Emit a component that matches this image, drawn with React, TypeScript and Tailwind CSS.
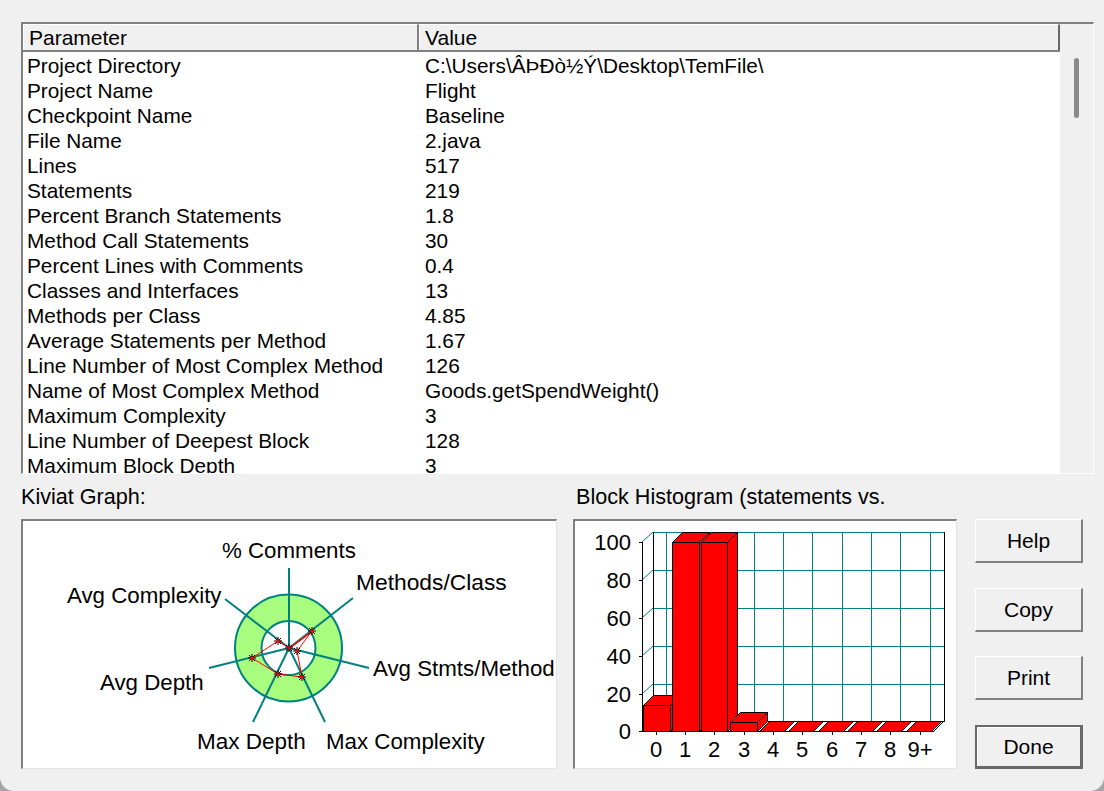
const ROWS: [string, string][] = [
  ['Project Directory', 'C:\\Users\\ÂÞÐò½Ý\\Desktop\\TemFile\\'],
  ['Project Name', 'Flight'],
  ['Checkpoint Name', 'Baseline'],
  ['File Name', '2.java'],
  ['Lines', '517'],
  ['Statements', '219'],
  ['Percent Branch Statements', '1.8'],
  ['Method Call Statements', '30'],
  ['Percent Lines with Comments', '0.4'],
  ['Classes and Interfaces', '13'],
  ['Methods per Class', '4.85'],
  ['Average Statements per Method', '1.67'],
  ['Line Number of Most Complex Method', '126'],
  ['Name of Most Complex Method', 'Goods.getSpendWeight()'],
  ['Maximum Complexity', '3'],
  ['Line Number of Deepest Block', '128'],
  ['Maximum Block Depth', '3'],
];

const TEAL = '#008080';
const CX = 266;
const CY = 127;

const SPOKES = [
  [266, 47],
  [330, 77],
  [346, 147],
  [302, 201],
  [230, 201],
  [186, 147],
  [202, 78],
];

// red plot, coordinates relative to the kiviat box
const PLOT: [number, number][] = [
  [266, 127],
  [289, 110],
  [274, 130],
  [279, 156],
  [255, 153],
  [229, 137],
  [255, 120],
];

const KIVIAT_LABELS: [string, number, number, number][] = [
  ['% Comments', 199, 37, 22.3],
  ['Methods/Class', 333, 69, 22.8],
  ['Avg Stmts/Method', 350, 155, 22.3],
  ['Max Complexity', 303, 228, 22.3],
  ['Max Depth', 174, 228, 22.5],
  ['Avg Depth', 77, 169, 22.3],
  ['Avg Complexity', 44, 82, 22.3],
];

const Kiviat = () => (
  <svg width="534" height="248" viewBox="0 0 534 248" className="block" style={{ fontFamily: '"Liberation Sans", Arial, sans-serif' }}>
    <circle cx="265.5" cy={CY} r="53.5" fill="#a8fc7e" stroke={TEAL} strokeWidth="2" />
    <circle cx="265.5" cy={CY} r="27" fill="#ffffff" stroke={TEAL} strokeWidth="2" />
    {SPOKES.map(([x, y]) => (
      <line key={`${x}-${y}`} x1={CX} y1={CY} x2={x} y2={y} stroke={TEAL} strokeWidth="2" />
    ))}
    <polygon points={PLOT.map((p) => p.join(',')).join(' ')} fill="none" stroke="#ff0000" strokeWidth="1" />
    <line x1="266" y1="127" x2="289" y2="110" stroke="#ff0000" strokeWidth="1" transform="translate(0 1)" />
    {PLOT.map(([x, y]) => (
      <g key={`${x}-${y}`}>
        <path d={`M${x - 4} ${y}h8M${x} ${y - 4}v8M${x - 3} ${y + 3}l6 -6M${x - 3} ${y - 3}l6 6`} stroke="#000000" strokeWidth="1" />
        <rect x={x - 1.5} y={y - 1.5} width="3" height="3" fill="#ff0000" />
      </g>
    ))}
    {KIVIAT_LABELS.map(([t, x, y, size]) => (
      <text key={t} x={x} y={y} fontSize={size} fill="#000000">
        {t}
      </text>
    ))}
  </svg>
);

const HIST_X = ['0', '1', '2', '3', '4', '5', '6', '7', '8', '9+'];
const HIST_Y = [0, 20, 40, 60, 80, 100];
const TICK_Y = [210, 173, 135, 97, 59, 21];
const TICK_X = [81, 110, 139, 169, 198, 227, 257, 286, 315, 345];
const BARS = [
  { x: 68, w: 27, top: 184 },
  { x: 97, w: 27, top: 21 },
  { x: 126, w: 26, top: 21 },
  { x: 155, w: 27, top: 201 },
];
const BASE = 210;

const Histogram = () => (
  <svg width="382" height="248" viewBox="0 0 382 248" className="block" style={{ fontFamily: '"Liberation Sans", Arial, sans-serif' }}>
    {/* back wall */}
    <rect x="78.5" y="11.5" width="291" height="189" fill="#ffffff" stroke="#000000" />
    {[11, 49, 87, 125, 163].map((y) => (
      <line key={y} x1="79" x2="369" y1={y + 0.5} y2={y + 0.5} stroke={TEAL} />
    ))}
    {TICK_X.map((x) => (
      <line key={x} x1={x + 10.5} x2={x + 10.5} y1="11" y2="200" stroke={TEAL} />
    ))}
    {TICK_Y.map((y) => (
      <line key={y} x1="67" y1={y} x2="78" y2={y - 10} stroke={TEAL} />
    ))}
    <line x1="67.5" y1="21" x2="67.5" y2="210" stroke="#000000" />
    <line x1="78.5" y1="11" x2="78.5" y2="200" stroke="#000000" />
    <line x1="359" y1="210" x2="369" y2="200" stroke="#000000" />
    {/* empty bars */}
    {TICK_X.slice(4).map((t) => {
      const x = t - 13.5;
      return (
        <polygon
          key={t}
          points={`${x},${BASE + 0.5} ${x + 25},${BASE + 0.5} ${x + 35},${BASE - 9.5} ${x + 10},${BASE - 9.5}`}
          fill="#ff0000"
          stroke="#000000"
        />
      );
    })}
    {/* bars with a height */}
    {BARS.map(({ x, w, top }) => {
      const l = x + 0.5;
      const t = top + 0.5;
      const b = BASE + 0.5;
      return (
        <g key={x} fill="#ff0000" stroke="#000000">
          <polygon points={`${l},${t} ${l + 10},${t - 10} ${l + w + 10},${t - 10} ${l + w},${t}`} />
          <polygon points={`${l + w},${t} ${l + w + 10},${t - 10} ${l + w + 10},${b - 10} ${l + w},${b}`} />
          <rect x={l} y={t} width={w} height={b - t} />
        </g>
      );
    })}
    <line x1="64" x2="359" y1="210.5" y2="210.5" stroke="#000000" />
    {TICK_Y.map((y) => (
      <line key={y} x1="64" x2="67" y1={y + 0.5} y2={y + 0.5} stroke="#000000" />
    ))}
    {TICK_X.map((x) => (
      <line key={x} x1={x + 0.5} x2={x + 0.5} y1="210" y2="214" stroke="#000000" />
    ))}
    {HIST_Y.map((v, i) => (
      <text key={v} x="56" y={TICK_Y[i] + 8} fontSize="22" textAnchor="end" fill="#000000">
        {v}
      </text>
    ))}
    {HIST_X.map((t, i) => (
      <text key={t} x={TICK_X[i]} y="236" fontSize="22" textAnchor="middle" fill="#000000">
        {t}
      </text>
    ))}
  </svg>
);

const DialogButton = ({ label, primary }: { label: string; primary?: boolean }) => (
  <button
    className={
      primary
        ? 'w-[108px] h-[44px] bg-[#f0f0f0] text-[21px] text-black border-2 border-[#696969] border-r-[3px] border-b-[3px] shadow-[inset_1px_1px_0_#ffffff]'
        : 'w-[108px] h-[44px] bg-[#f0f0f0] text-[21px] text-black border border-white border-r-2 border-b-2 border-r-[#808080] border-b-[#808080]'
    }
  >
    {label}
  </button>
);

export default function App() {
  return (
    <div className="w-[1104px] h-[791px] bg-[#a6a6a6]">
      <div className="w-[1104px] h-[791px] bg-[#f0f0f0] pt-[22px] pl-[21px] overflow-hidden text-black font-['Liberation_Sans',Arial,sans-serif] rounded-b-[14px]">
        {/* metrics table */}
        <div className="w-[1073px] h-[452px] flex border-t-2 border-l-2 border-t-[#808080] border-l-[#808080] border-r border-b border-r-white border-b-white">
          <div className="w-[1037px] flex flex-col bg-white">
            <div className="flex h-[28px] shrink-0 bg-[#f0f0f0] border-b-2 border-[#808080]">
              <div className="w-[396px] pl-[5px] text-[21px] leading-[26px] border-t border-l border-white border-r-2 border-r-[#808080]">Parameter</div>
              <div className="flex-1 pl-[5px] text-[21px] leading-[26px] border-t border-l border-white border-r-2 border-r-[#696969]">Value</div>
            </div>
            <div className="flex-1 overflow-hidden pt-[1px]">
              {ROWS.map(([param, value]) => (
                <div key={param} className="flex h-[25px] text-[20.8px] leading-[25px] whitespace-nowrap">
                  <div className="w-[398px] pl-[4px]">{param}</div>
                  <div className="flex-1 pl-[4px]">{value}</div>
                </div>
              ))}
            </div>
          </div>
          <div className="flex-1 pt-[34px] flex justify-center">
            <div className="w-[5px] h-[60px] rounded-full bg-[#8a8a8a]" />
          </div>
        </div>
        {/* graphs and buttons */}
        <div className="flex mt-[9px]">
          <div className="w-[552px]">
            <div className="h-[36px] text-[21.6px] leading-[28px]">Kiviat Graph:</div>
            <div className="w-[536px] h-[250px] bg-white border-t-2 border-l-2 border-t-[#808080] border-l-[#808080] border-r border-b border-r-[#e4e4e4] border-b-[#e4e4e4] overflow-hidden">
              <Kiviat />
            </div>
          </div>
          <div className="w-[402px]">
            <div className="h-[36px] text-[21.6px] leading-[28px] pl-[3px] whitespace-nowrap">Block Histogram (statements vs.</div>
            <div className="w-[384px] h-[250px] bg-white border-t-2 border-l-2 border-t-[#808080] border-l-[#808080] border-r border-b border-r-[#e4e4e4] border-b-[#e4e4e4] overflow-hidden">
              <Histogram />
            </div>
          </div>
          <div className="flex flex-col pt-[36px]">
            <DialogButton label="Help" />
            <div className="h-[25px]" />
            <DialogButton label="Copy" />
            <div className="h-[24px]" />
            <DialogButton label="Print" />
            <div className="h-[25px]" />
            <DialogButton label="Done" primary />
          </div>
        </div>
      </div>
    </div>
  );
}
